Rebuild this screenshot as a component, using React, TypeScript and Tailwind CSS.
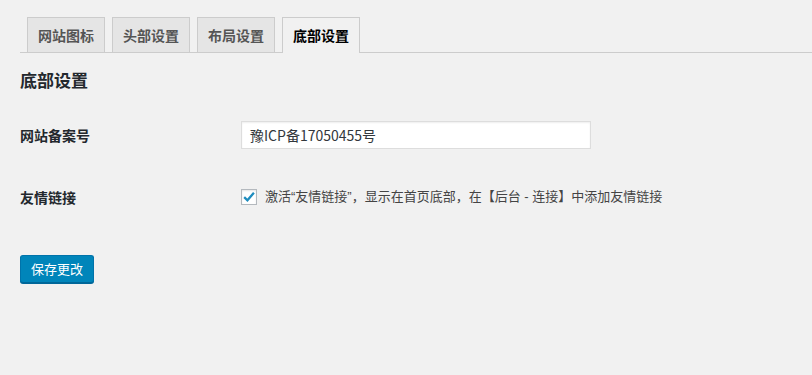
import React from "react";

const tabs = ["网站图标", "头部设置", "布局设置", "底部设置"];

export default function App() {
  const active = 3;
  return (
    <div
      className="min-h-screen bg-[#f1f1f1] pt-[17px] pl-5 text-[#444]"
      style={{ fontFamily: '"Noto Sans CJK SC", "Noto Sans", sans-serif' }}
    >
      {/* tabs */}
      <div className="flex gap-[7px] border-b border-[#ccc] pl-[7px]">
        {tabs.map((t, i) => (
          <div
            key={t}
            className={
              i === active
                ? "-mb-px flex h-[36px] w-[78px] items-start justify-center border border-b-0 border-[#ccc] bg-[#f1f1f1] pt-[5px] text-[14px] leading-6 font-semibold text-black"
                : "flex h-[35px] w-[78px] items-start justify-center border border-b-0 border-[#ccc] bg-[#e5e5e5] pt-[5px] text-[14px] leading-6 font-semibold text-[#555]"
            }
          >
            {t}
          </div>
        ))}
      </div>

      <h2 className="mt-[15px] text-[17px] leading-6 font-semibold text-[#23282d]">
        底部设置
      </h2>

      {/* row 1 */}
      <div className="mt-[29px] flex items-center">
        <div className="w-[221px] text-[14px] font-semibold text-[#23282d]">
          网站备案号
        </div>
        <div className="flex h-[28px] w-[350px] items-center border border-[#ddd] bg-white px-[8px] text-[14px] text-[#32373c] shadow-[inset_0_1px_2px_rgba(0,0,0,0.07)]">
          豫ICP备17050455号
        </div>
      </div>

      {/* row 2 */}
      <div className="mt-[40px] flex h-4 items-center">
        <div className="w-[221px] text-[14px] font-semibold text-[#23282d]">
          友情链接
        </div>
        <div className="flex items-center gap-[8px]">
          <span className="flex h-4 w-4 items-center justify-center border border-[#b4b9be] bg-white shadow-[inset_0_1px_2px_rgba(0,0,0,0.1)]">
            <svg viewBox="0 0 16 16" className="h-[14px] w-[14px]">
              <path
                d="M2.5 8.2 L6.2 11.8 L13.6 3.2"
                fill="none"
                stroke="#1e8cbe"
                strokeWidth="2.6"
                strokeLinecap="butt"
                strokeLinejoin="miter"
              />
            </svg>
          </span>
          <span
            className="text-[13px] leading-4 text-[#444]"
            style={{ fontFamily: '"Liberation Sans", "Noto Sans CJK SC", sans-serif' }}
          >
            激活“友情链接”，显示在首页底部，在【后台 - 连接】中添加友情链接
          </span>
        </div>
      </div>

      {/* submit */}
      <div className="mt-[50px]">
        <button className="h-[28px] rounded-[3px] border border-[#0073aa] border-b-[#006799] bg-[#0085ba] px-[10px] text-[13px] text-white shadow-[0_1px_0_#006799]">
          保存更改
        </button>
      </div>
    </div>
  );
}
